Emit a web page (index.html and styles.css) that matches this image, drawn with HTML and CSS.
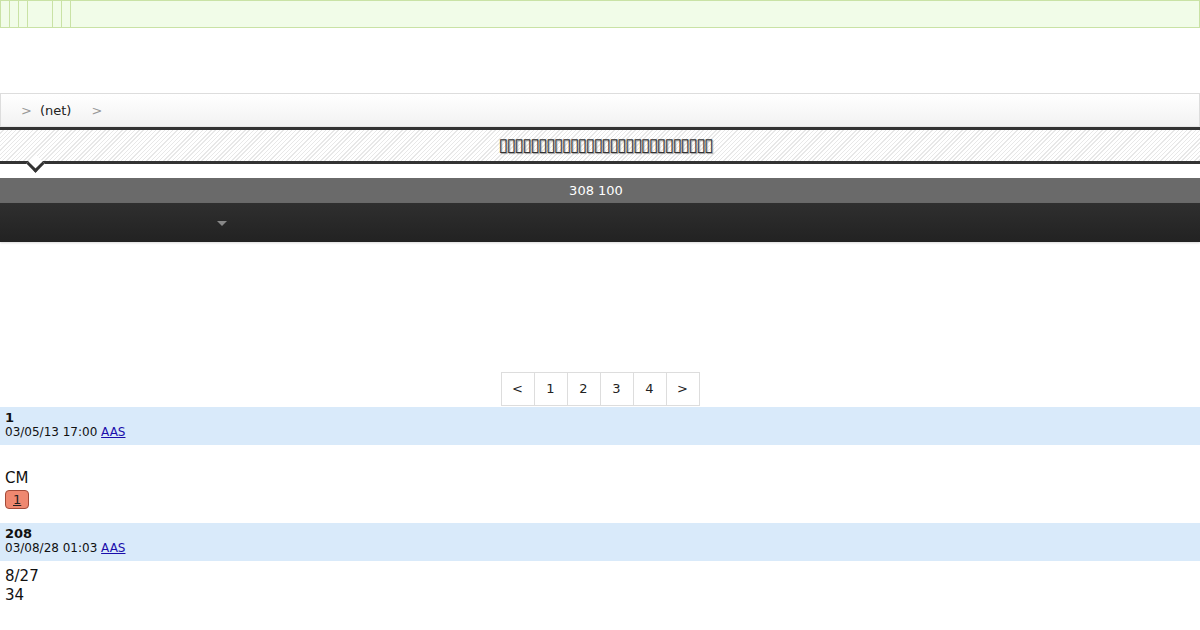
FILE: index.html
```html
<!DOCTYPE html>
<html lang="ja">
<head>
    <meta charset="UTF-8">
    <title>(net)</title>
    <link rel="stylesheet" href="styles.css">
</head>
<body>
    <div class="topbar">
        <ul class="toplinks">
            <li><a href="#"></a></li>
            <li><a href="#"></a></li>
            <li><a href="#"></a></li>
            <li class="wide"><a href="#"></a></li>
            <li><a href="#"></a></li>
            <li><a href="#"></a></li>
        </ul>
    </div>

    <div class="breadcrumb">
        <span class="sep">&gt;</span>
        <a href="#">(net)</a>
        <span class="sep">&gt;</span>
    </div>

    <div class="title-band">
        <h1>▯▯▯▯▯▯▯▯▯▯▯▯▯▯▯▯▯▯▯▯▯▯▯▯▯▯▯</h1>
        <span class="notch"></span>
    </div>

    <div class="stats">308 100</div>
    <div class="menubar">
        <span class="caret"></span>
    </div>

    <div class="pager">
        <a href="#">&lt;</a>
        <a href="#">1</a>
        <a href="#">2</a>
        <a href="#">3</a>
        <a href="#">4</a>
        <a href="#">&gt;</a>
    </div>

    <div class="post">
        <div class="post-head">
            <div class="num">1</div>
            <div class="meta">03/05/13 17:00 <a href="#">AAS</a></div>
        </div>
        <div class="post-body first">
            <p>CM</p>
            <a class="res" href="#">1</a>
        </div>
    </div>

    <div class="post">
        <div class="post-head">
            <div class="num">208</div>
            <div class="meta">03/08/28 01:03 <a href="#">AAS</a></div>
        </div>
        <div class="post-body">
            <p>8/27<br>34</p>
        </div>
    </div>
</body>
</html>
```

FILE: styles.css
```css
body {
    margin: 0;
    font-family: "DejaVu Sans", sans-serif;
    color: #111;
    background: #fff;
}
.topbar {
    height: 26px;
    background-color: #f1fce8;
    border: 1px solid #c9e2a5;
}
.toplinks {
    list-style: none;
    margin: 0;
    padding: 0;
    display: flex;
    height: 100%;
}
.toplinks li {
    width: 8px;
    border-right: 1px solid #c9e2a5;
}
.toplinks li.wide {
    width: 24px;
}
.breadcrumb {
    margin-top: 65px;
    height: 32px;
    display: flex;
    align-items: center;
    gap: 8px;
    padding-left: 20px;
    font-size: 13px;
    border: 1px solid #ddd;
    border-bottom-color: #e6e6e6;
    background: linear-gradient(#fff, #f2f2f2);
}
.breadcrumb a {
    color: #222;
    text-decoration: none;
    margin-right: 12px;
}
.breadcrumb .sep {
    color: #999;
}
.title-band {
    position: relative;
    height: 31px;
    border-top: 3px solid #333;
    border-bottom: 3px solid #333;
    background: repeating-linear-gradient(135deg, #fff 0, #fff 2px, #e8e8e8 2px, #e8e8e8 3px);
    display: flex;
    align-items: center;
    justify-content: center;
}
.title-band h1 {
    margin: 0 0 2px;
    padding-left: 10px;
    font-size: 18px;
    letter-spacing: -2px;
    font-weight: normal;
    line-height: 22px;
    color: #333;
    text-shadow: 1px 1px 1px #999;
}
.notch {
    position: absolute;
    left: 29px;
    bottom: -9px;
    width: 10px;
    height: 10px;
    background: #fff;
    border-right: 3px solid #333;
    border-bottom: 3px solid #333;
    transform: rotate(45deg);
}
.stats {
    margin-top: 14px;
    height: 25px;
    line-height: 25px;
    padding-right: 8px;
    text-align: center;
    color: #fff;
    font-size: 13px;
    background-color: #6a6a6a;
}
.menubar {
    height: 39px;
    background: linear-gradient(#2f2f2f, #222);
    box-shadow: 0 1px 2px rgba(0, 0, 0, 0.15);
    position: relative;
}
.caret {
    position: absolute;
    left: 217px;
    top: 18px;
    border-left: 5px solid transparent;
    border-right: 5px solid transparent;
    border-top: 5px solid #888;
}
.pager {
    display: flex;
    justify-content: center;
    margin: 130px 0 1px;
}
.pager a {
    width: 32px;
    height: 32px;
    line-height: 32px;
    text-align: center;
    font-size: 13px;
    color: #222;
    text-decoration: none;
    border: 1px solid #ddd;
    border-left: none;
}
.pager a:first-child {
    border-left: 1px solid #ddd;
}
.post-head {
    background-color: #d9eafa;
    padding: 4px 5px 6px;
    font-size: 12px;
    line-height: 14px;
}
.post-head .num {
    font-size: 13px;
    font-weight: bold;
}
.post-head a {
    color: #1a0dab;
}
.post-body {
    padding: 6px 5px 14px;
    font-size: 15px;
}
.post-body.first {
    padding-top: 24px;
}
.post-body p {
    margin: 0;
    line-height: 19px;
}
.res {
    display: inline-block;
    margin-top: 2px;
    padding: 0 7px;
    height: 17px;
    line-height: 17px;
    font-size: 13px;
    color: #222;
    background-color: #ef8870;
    border: 1px solid #a24b39;
    border-radius: 4px;
}
```
